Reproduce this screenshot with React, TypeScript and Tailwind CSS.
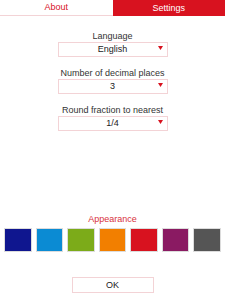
const swatches = [
  "bg-[#0f168f]",
  "bg-[#0b8bd3]",
  "bg-[#7cab19]",
  "bg-[#f27f00]",
  "bg-[#d8121f]",
  "bg-[#8a1a62]",
  "bg-[#555555]",
];

const Select = ({ value }: { value: string }) => (
  <div className="relative flex h-[15px] w-[110px] items-center justify-center border border-[#f3d3d6] bg-white text-[9px] leading-none text-[#222]">
    {value}
    <svg className="absolute right-[4px] top-[3px]" width="5" height="4" viewBox="0 0 5 4">
      <path d="M0 0 L5 0 L2.5 4 Z" fill="#d8121f" />
    </svg>
  </div>
);

const Field = ({ label, value, first }: { label: string; value: string; first?: boolean }) => (
  <div className={`flex flex-col items-center ${first ? "mt-[14px]" : "mt-[10px]"}`}>
    <div className="text-[9px] leading-[12px] text-[#333]">{label}</div>
    <Select value={value} />
  </div>
);

export default function App() {
  return (
    <div className="flex h-[300px] w-[225px] flex-col bg-white font-['Liberation_Sans',Arial,sans-serif]">
      <div className="flex h-[16px] text-[9px] leading-none">
        <div className="flex flex-1 items-center justify-center border-b border-[#f3d3d6] text-[#d8121f]">
          About
        </div>
        <div className="flex flex-1 items-center justify-center bg-[#d8121f] text-white">Settings</div>
      </div>

      <Field label="Language" value="English" first />
      <Field label="Number of decimal places" value="3" />
      <Field label="Round fraction to nearest" value="1/4" />

      <div className="mt-[82px] text-center text-[9px] leading-[12px] text-[#d8323c]">Appearance</div>
      <div className="mt-[3px] flex gap-[4px] px-[4px]">
        {swatches.map((c) => (
          <div key={c} className={`h-[24px] flex-1 border border-[#dcdcdc] ${c}`} />
        ))}
      </div>

      <div className="mt-[25px] flex justify-center">
        <button className="flex h-[16px] w-[82px] items-center justify-center border border-[#f3d3d6] bg-white text-[9px] leading-none text-[#222]">
          OK
        </button>
      </div>
    </div>
  );
}
